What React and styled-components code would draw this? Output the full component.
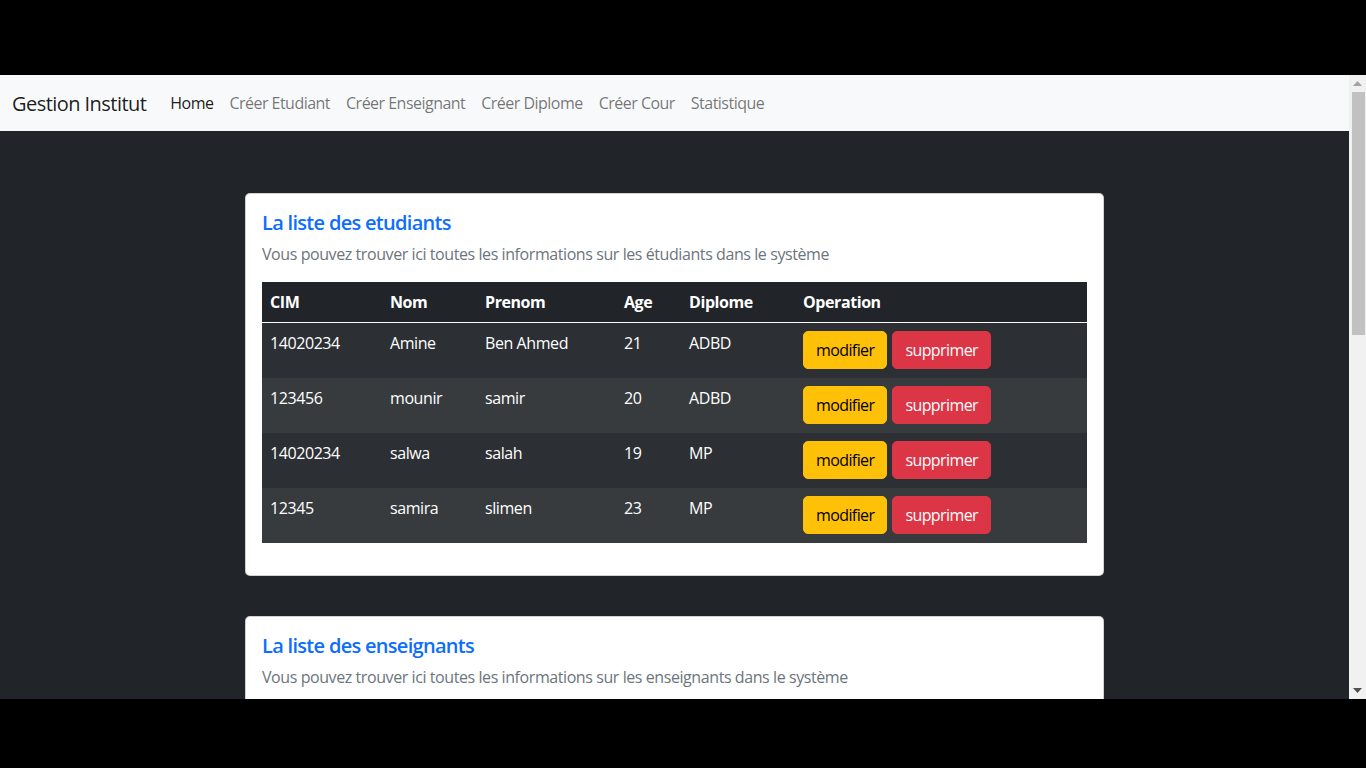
import React from "react";
import styled, { createGlobalStyle } from "styled-components";

const Global = createGlobalStyle`
  html, body { margin: 0; padding: 0; background: #000; }
  body { font-family: "Open Sans", "Noto Sans", sans-serif; overflow: hidden; letter-spacing: -0.42px; }
  * { box-sizing: border-box; }
`;

const Frame = styled.div`
  width: 1366px;
  height: 768px;
  background: #000;
  display: flex;
  flex-direction: column;
`;

const Letterbox = styled.div`
  height: ${(p) => p.$h}px;
  background: #000;
  flex: none;
`;

const Viewport = styled.div`
  height: 624px;
  display: flex;
  flex: none;
  overflow: hidden;
`;

const Page = styled.div`
  flex: 1;
  background: #212529;
  overflow: hidden;
`;

const Scrollbar = styled.div`
  width: 17px;
  background: #f1f1f1;
  display: flex;
  flex-direction: column;
  align-items: center;
`;

const Arrow = styled.div`
  height: 17px;
  width: 17px;
  display: flex;
  align-items: center;
  justify-content: center;
  flex: none;
`;

const Track = styled.div`
  flex: 1;
  width: 100%;
  display: flex;
  flex-direction: column;
  align-items: center;
`;

const Thumb = styled.div`
  margin-left: 1px;
  width: 13px;
  height: 243px;
  background: #c1c1c1;
`;

const Navbar = styled.nav`
  height: 56px;
  background: #f8f9fa;
  display: flex;
  align-items: center;
  padding: 0 12px;
`;

const Brand = styled.a`
  font-size: 20px;
  letter-spacing: -0.55px;
  color: rgba(0, 0, 0, 0.9);
  margin-right: 16px;
  text-decoration: none;
  white-space: nowrap;
`;

const NavLink = styled.a`
  font-size: 16px;
  padding: 8px;
  letter-spacing: -0.52px;
  color: ${(p) => (p.$active ? "rgba(0,0,0,0.9)" : "rgba(0,0,0,0.55)")};
  text-decoration: none;
  white-space: nowrap;
`;

const Content = styled.main`
  padding-top: 62px;
  display: flex;
  flex-direction: column;
  align-items: center;
  gap: 40px;
`;

const Card = styled.section`
  width: 859px;
  background: #fff;
  border: 1px solid rgba(0, 0, 0, 0.175);
  border-radius: 5px;
  padding: 16px;
  flex: none;
`;

const Title = styled.h5`
  margin: 0 0 8px;
  padding-top: 1px;
  height: 24px;
  font-size: 20px;
  line-height: 24px;
  font-weight: 600;
  letter-spacing: -0.7px;
  color: #0d6efd;
`;

const Subtitle = styled.p`
  margin: 0 0 16px;
  font-size: 16px;
  line-height: 24px;
  color: #6c757d;
`;

const Table = styled.table`
  width: 100%;
  border-collapse: collapse;
  color: #fff;
  font-size: 16px;
  line-height: 24px;
  margin-bottom: 16px;
`;

const Th = styled.th`
  text-align: left;
  font-weight: 700;
  padding: 8px;
  background: #212529;
  width: ${(p) => p.$w || "auto"};
  border-bottom: 1px solid #fff;
`;

const Tr = styled.tr`
  background: ${(p) => (p.$odd ? "#2c3034" : "#373b3e")};
`;

const Td = styled.td`
  padding: 8px;
  vertical-align: top;
  height: 55px;
`;

const Actions = styled.div`
  display: flex;
  gap: 5px;
`;

const Button = styled.button`
  font-family: inherit;
  letter-spacing: -0.6px;
  font-size: 16px;
  line-height: 24px;
  padding: 6px 12px;
  border-radius: 5px;
  border: 1px solid ${(p) => (p.$variant === "warning" ? "#ffc107" : "#dc3545")};
  background: ${(p) => (p.$variant === "warning" ? "#ffc107" : "#dc3545")};
  color: ${(p) => (p.$variant === "warning" ? "#000" : "#fff")};
  cursor: pointer;
`;

const students = [
  ["14020234", "Amine", "Ben Ahmed", "21", "ADBD"],
  ["123456", "mounir", "samir", "20", "ADBD"],
  ["14020234", "salwa", "salah", "19", "MP"],
  ["12345", "samira", "slimen", "23", "MP"],
];

const cols = [
  ["CIM", "120px"],
  ["Nom", "95px"],
  ["Prenom", "139px"],
  ["Age", "65px"],
  ["Diplome", "114px"],
  ["Operation", "auto"],
];

export default function App() {
  return (
    <>
      <Global />
      <Frame>
        <Letterbox $h={75} />
        <Viewport>
          <Page>
            <Navbar>
              <Brand href="#">Gestion Institut</Brand>
              <NavLink href="#" $active>Home</NavLink>
              <NavLink href="#">Créer Etudiant</NavLink>
              <NavLink href="#">Créer Enseignant</NavLink>
              <NavLink href="#">Créer Diplome</NavLink>
              <NavLink href="#">Créer Cour</NavLink>
              <NavLink href="#">Statistique</NavLink>
            </Navbar>
            <Content>
              <Card>
                <Title>La liste des etudiants</Title>
                <Subtitle>
                  Vous pouvez trouver ici toutes les informations sur les étudiants dans le système
                </Subtitle>
                <Table>
                  <thead>
                    <tr>
                      {cols.map(([c, w]) => (
                        <Th key={c} $w={w}>{c}</Th>
                      ))}
                    </tr>
                  </thead>
                  <tbody>
                    {students.map((s, i) => (
                      <Tr key={i} $odd={i % 2 === 0}>
                        {s.map((v, j) => (
                          <Td key={j}>{v}</Td>
                        ))}
                        <Td>
                          <Actions>
                            <Button $variant="warning">modifier</Button>
                            <Button $variant="danger">supprimer</Button>
                          </Actions>
                        </Td>
                      </Tr>
                    ))}
                  </tbody>
                </Table>
              </Card>
              <Card>
                <Title>La liste des enseignants</Title>
                <Subtitle>
                  Vous pouvez trouver ici toutes les informations sur les enseignants dans le système
                </Subtitle>
              </Card>
            </Content>
          </Page>
          <Scrollbar>
            <Arrow>
              <svg width="9" height="5" viewBox="0 0 9 5"><path d="M0 5 L4.5 0 L9 5 Z" fill="#a3a3a3" /></svg>
            </Arrow>
            <Track>
              <Thumb />
            </Track>
            <Arrow>
              <svg width="9" height="5" viewBox="0 0 9 5"><path d="M0 0 L4.5 5 L9 0 Z" fill="#505050" /></svg>
            </Arrow>
          </Scrollbar>
        </Viewport>
        <Letterbox $h={69} />
      </Frame>
    </>
  );
}
